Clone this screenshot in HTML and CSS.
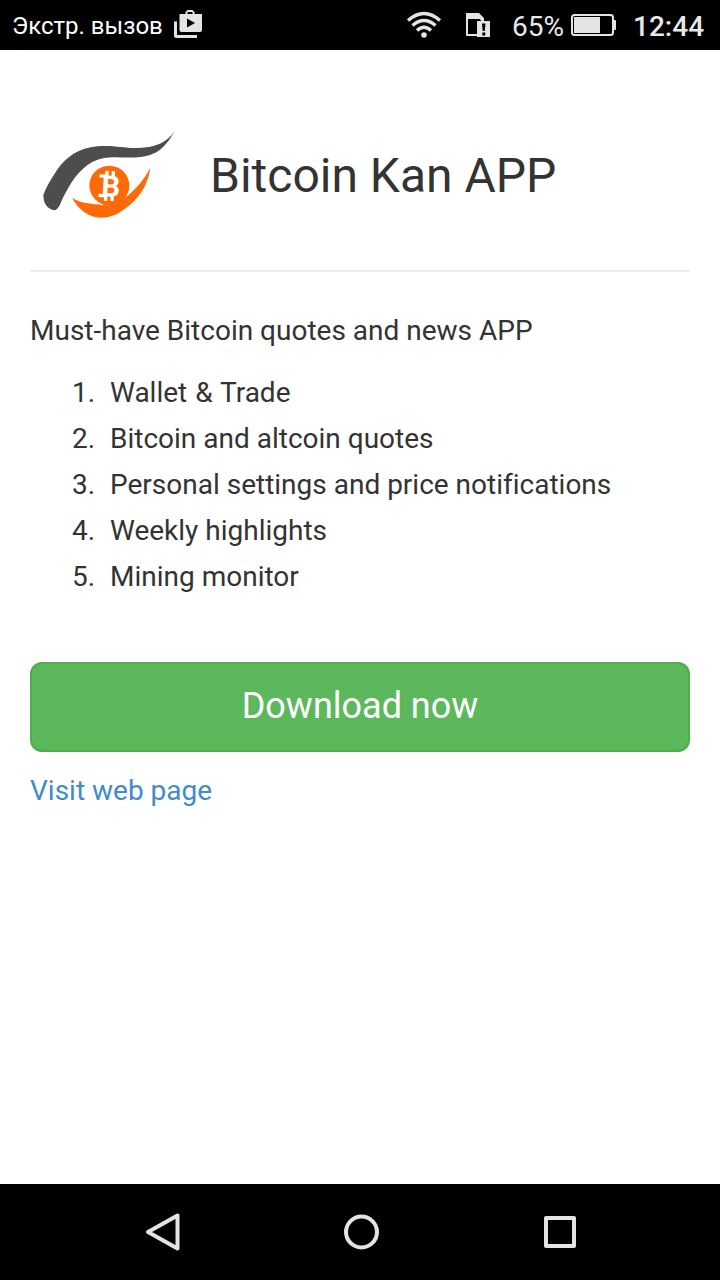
FILE: index.html
```html
<!DOCTYPE html>
<html lang="en">
<head>
  <meta charset="UTF-8" />
  <meta name="viewport" content="width=device-width, initial-scale=1.0"/>
  <title>Bitcoin Kan APP</title>
  <link rel="stylesheet" href="styles.css">
</head>
<body>

  <div class="status-bar">
    <span class="carrier" lang="ru">Экстр. вызов</span>
    <svg class="icon-store" width="30" height="30" viewBox="0 0 30 30">
      <path d="M2.500 13.500v14q0 1 1 1H24" fill="none" stroke="#e4e4e4" stroke-width="3"/>
      <path fill="#e4e4e4" fill-rule="evenodd" d="M6.500 6h6V4L14.500 2h5L21.500 4V6h7.500v16q0 2-2 2h-18.500q-2 0-2-2zM14.500 6h5V4h-5zM14 10.500v9l8-4.500z"/>
    </svg>
    <svg class="icon-wifi" width="36" height="28" viewBox="0 0 36 28">
      <g fill="none" stroke="#e4e4e4" stroke-width="3.3">
        <path d="M2 9.500Q18-4.500 34 9.500"/>
        <path d="M6.500 14.500Q18 4.500 29.500 14.500"/>
        <path d="M11 19.500Q18 13 25 19.500"/>
      </g>
      <circle cx="18" cy="24" r="2.800" fill="#e4e4e4"/>
    </svg>
    <svg class="icon-sim" width="26" height="26" viewBox="0 0 26 26">
      <path d="M12 23H2V6h13l2.500 2.500" fill="none" stroke="#e4e4e4" stroke-width="2" stroke-linejoin="round"/>
      <path d="M1 1h13l5 5v3h-2V7H1z" fill="#e4e4e4"/>
      <path d="M12 9h13v16H12z" fill="#e4e4e4"/>
      <path d="M17 11.500h3.500l-.8 7.500h-2zM17.300 20.500h3v3h-3z" fill="#000"/>
    </svg>
    <span class="percent">65%</span>
    <svg class="icon-battery" width="46" height="24" viewBox="0 0 46 24">
      <rect x="1" y="2" width="41" height="20" rx="2.500" fill="none" stroke="#e4e4e4" stroke-width="2"/>
      <path d="M3 4h26v16H3z" fill="#e4e4e4"/>
      <path d="M42 7h2q1 0 1 1v8q0 1-1 1h-2z" fill="#e4e4e4"/>
    </svg>
    <span class="clock">12:44</span>
  </div>

  <main class="content">
    <header class="app-header">
      <svg class="logo" width="160" height="120" viewBox="0 0 480 360">
        <path fill="#4d4d4d" d="M435 47C411 81 379 97 325 99C278 100 253 90 203 94C146 99 108 126 81 165C62 194 48 218 40 240C40 262 49 281 73 286C87 283 91 265 100 246C121 204 145 166 183 143C229 116 280 132 331 126C390 119 411 87 435 47z"/>
        <circle cx="238" cy="212" r="60" fill="#ff6908"/>
        <path fill="#ff6908" d="M361 158C355 201 336 239 300 269C274 292 246 308 213 308C177 307 145 284 126 248C148 263 178 266 205 268C240 276 272 264 293 241C318 222 342 194 361 158z"/>
        <path d="M178 228C184 249 197 262 218 270M299 212C302 226 297 234 292 243" fill="none" stroke="#fff" stroke-width="4"/>
        <g transform="rotate(3 238 213)">
          <text class="logo-mark" x="243" y="244" text-anchor="middle">B</text>
          <path d="M229 168v18M248 168v18M229 240v18M248 240v18M207 184h18M207 243h18" stroke="#fff" stroke-width="10"/>
        </g>
      </svg>
      <h1>Bitcoin Kan APP</h1>
    </header>

    <p class="intro">Must-have Bitcoin quotes and news APP</p>
    <ol class="features">
      <li>Wallet &amp; Trade</li>
      <li>Bitcoin and altcoin quotes</li>
      <li>Personal settings and price notifications</li>
      <li>Weekly highlights</li>
      <li>Mining monitor</li>
    </ol>

    <a class="btn" href="#">Download now</a>
    <a class="link" href="#">Visit web page</a>
  </main>

  <nav class="nav-bar">
    <svg width="40" height="40" viewBox="0 0 40 40">
      <path d="M34.500 3.500v33L5 20z"/>
    </svg>
    <svg width="40" height="40" viewBox="0 0 40 40">
      <circle cx="19.500" cy="20" r="15.500"/>
    </svg>
    <svg width="40" height="40" viewBox="0 0 40 40">
      <rect x="6" y="6" width="28" height="28"/>
    </svg>
  </nav>

</body>
</html>
```
FILE: styles.css
```css
* {
  box-sizing: border-box;
}
body {
  margin: 0;
  min-height: 100vh;
  display: flex;
  flex-direction: column;
  font-family: Roboto, sans-serif;
  font-size: 28px;
  font-variant-ligatures: none;
  color: #333;
  background: #fff;
}
.status-bar {
  display: flex;
  align-items: center;
  height: 50px;
  padding: 0 16px 0 12px;
  background: #000;
  color: #e8e8e8;
  white-space: nowrap;
}
.carrier {
  width: 161px;
  padding-top: 1px;
  font-size: 24px;
  color: #fff;
}
.icon-store {
  margin-bottom: 4px;
}
.icon-wifi {
  margin-left: auto;
}
.icon-sim {
  margin-left: 23px;
}
.percent {
  width: 52px;
  margin-left: 21px;
  padding-top: 3px;
}
.icon-battery {
  margin-left: 7px;
}
.clock {
  width: 71px;
  margin-left: 16px;
  padding-top: 3px;
  font-weight: 500;
}
.content {
  flex: 1;
  padding: 0 30px;
}
.app-header {
  display: flex;
  align-items: center;
  height: 222px;
  border-bottom: 2px solid #eee;
}
.logo {
  margin-top: 30px;
}
.logo-mark {
  font-size: 88px;
  font-weight: bold;
  fill: #fff;
}
h1 {
  margin: 32px 0 0 20px;
  font-size: 48px;
  font-weight: 400;
  line-height: 56px;
}
.intro {
  margin: 36px 0 16px;
  line-height: 46px;
}
.features {
  margin: 0;
  padding-left: 42px;
  line-height: 46px;
  list-style: none;
  counter-reset: feature;
}
.features li {
  display: flex;
  counter-increment: feature;
}
.features li::before {
  content: counter(feature) ".";
  width: 38px;
}
.features li:first-child {
  word-spacing: 1px;
}
.btn {
  display: block;
  height: 90px;
  margin: 62px 0 16px;
  border: 2px solid #4cae4c;
  border-radius: 12px;
  background: #5cb85c;
  color: #fff;
  font-size: 36px;
  line-height: 84px;
  text-align: center;
  text-decoration: none;
}
.link {
  color: #428bca;
  line-height: 46px;
  text-decoration: none;
}
.nav-bar {
  display: flex;
  justify-content: space-between;
  align-items: center;
  height: 96px;
  padding: 0 140px 0 143px;
  background: #000;
}
.nav-bar svg {
  fill: none;
  stroke: #e4e4e4;
  stroke-width: 4;
  stroke-linejoin: round;
}
```
